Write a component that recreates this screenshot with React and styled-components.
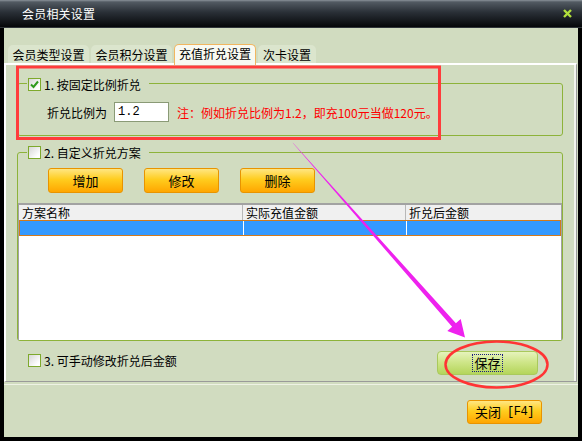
import React from "react";
import styled, { createGlobalStyle } from "styled-components";

const GlobalStyle = createGlobalStyle`
  html, body {
    margin: 0;
    padding: 0;
    background: #000;
  }
  body {
    font-family: "Noto Sans CJK SC", "Liberation Sans", sans-serif;
    font-size: 12px;
    color: #000;
  }
  * {
    box-sizing: border-box;
  }
`;

const Window = styled.div`
  position: relative;
  width: 582px;
  height: 441px;
  background: #000;
  display: flex;
  flex-direction: column;
  overflow: hidden;
`;

const TitleBar = styled.div`
  flex: none;
  height: 28px;
  display: flex;
  align-items: center;
  justify-content: space-between;
  padding: 0 10px 0 22px;
  background: linear-gradient(#8a9299 0, #525a62 2px, #2a3037 45%, #050709 100%);
  border-bottom: 1px solid #30353a;
`;

const Title = styled.span`
  color: #fff;
  font-size: 12px;
  line-height: 14px;
  letter-spacing: 0.2px;
`;

const Body = styled.div`
  flex: 1;
  margin: 0 4px 4px;
  background: #d1dcc0;
  display: flex;
  flex-direction: column;
`;

const TabStrip = styled.div`
  position: relative;
  z-index: 1;
  height: 19px;
  margin-top: 16px;
  padding-left: 4px;
  display: flex;
  align-items: flex-end;
  gap: 2px;
`;

const Tab = styled.div`
  width: ${(p) => p.$w}px;
  height: ${(p) => (p.$active ? 21 : 18)}px;
  margin-bottom: ${(p) => (p.$active ? -2 : 0)}px;
  display: flex;
  align-items: center;
  justify-content: center;
  line-height: 14px;
  border-radius: 5px 5px 0 0;
  background: ${(p) => (p.$active ? "#f8f9f1" : "#dbe5cd")};
  border: 1px solid ${(p) => (p.$active ? "#f1b660" : "transparent")};
  border-bottom: none;
  padding-bottom: ${(p) => (p.$active ? 2 : 0)}px;
`;

const TabPanel = styled.div`
  height: 319px;
  margin-right: 1px;
  border-style: solid;
  border-width: 2px 1px 1px 2px;
  border-color: #fff #9a9a9a #9a9a9a #fff;
  box-shadow: inset -2px 0 0 #f3f5ee;
  padding: 12px 13px 0 11px;
  display: flex;
  flex-direction: column;
`;

const Group = styled.fieldset`
  margin: ${(p) => p.$top || 0}px 0 0;
  padding: 0;
  min-width: 0;
  border: 1px solid #8db33a;
  border-radius: 3px;
`;

const Legend = styled.legend`
  margin-left: 9px;
  padding: 0 8px 0 1px;
  height: 13px;
  line-height: 13px;
`;

const LegendInner = styled.span`
  display: inline-flex;
  align-items: center;
  gap: 3px;
  height: 13px;
`;

const Box = styled.span`
  flex: none;
  width: 13px;
  height: 13px;
  border: 1px solid #7ea92c;
  background: linear-gradient(135deg, #d6d6d6, #ffffff 80%);
  display: inline-flex;
  align-items: center;
  justify-content: center;
`;

const RatioRow = styled.div`
  height: 20px;
  margin: 12px 0 13px;
  padding-left: 29px;
  display: flex;
  align-items: center;
`;

const RatioInput = styled.input`
  width: 55px;
  height: 20px;
  margin: 0 8px 0 7px;
  padding: 0 0 0 3px;
  border: 1px solid #8a9a76;
  background: #fff;
  font-family: "Liberation Mono", monospace;
  font-size: 12px;
  color: #000;
  outline: none;
`;

const Note = styled.span`
  color: #ff0000;
  white-space: nowrap;
`;

const ButtonRow = styled.div`
  margin-top: 9px;
  padding-left: 30px;
  display: flex;
  gap: 21px;
`;

const OrangeButton = styled.div`
  width: ${(p) => p.$w || 75}px;
  height: ${(p) => p.$h || 25}px;
  display: flex;
  align-items: center;
  justify-content: center;
  gap: 6px;
  border: 1px solid #e89400;
  border-radius: 3px;
  background: linear-gradient(#ffe682 0, #ffcd1e 45%, #ffa600 100%);
  font-size: ${(p) => p.$fs || 13}px;
  line-height: 14px;
`;

const Hotkey = styled.span`
  font-family: "Liberation Mono", monospace;
  font-size: 12px;
  letter-spacing: -0.5px;
`;

const List = styled.div`
  margin-top: 10px;
  height: 137px;
  background: #fff;
  border-top: 2px solid #a2a2a2;
  border-left: 1px solid #a2a2a2;
  border-right: 1px solid #a2a2a2;
`;

const ListRow = styled.div`
  display: grid;
  grid-template-columns: 224px 163px 1fr;
  height: ${(p) => (p.$head ? 15 : 16)}px;
  background: ${(p) => (p.$selected ? "#3399ff" : "#f0f0f0")};
  border: ${(p) => (p.$selected ? "1px solid #d27a1c" : "none")};
`;

const Cell = styled.div`
  padding-left: 3px;
  line-height: 15px;
  white-space: nowrap;
  border-right: ${(p) =>
    p.$last ? "none" : p.$sel ? "1px solid #ffffff" : "1px solid #b8b8b8"};
`;

const BottomRow = styled.div`
  margin-top: 10px;
  padding: 0 25px 0 11px;
  display: flex;
  justify-content: space-between;
  align-items: flex-start;
`;

const CheckLabel = styled.div`
  margin-top: 3px;
  display: flex;
  align-items: center;
  gap: 3px;
  line-height: 13px;
`;

const SaveButton = styled.div`
  width: 101px;
  height: 24px;
  display: flex;
  align-items: center;
  justify-content: center;
  border: 1px solid #a9c95c;
  border-radius: 4px;
  background: linear-gradient(#e6f3bc 0, #cfe68a 45%, #b4d55a 100%);
`;

const FocusText = styled.span`
  padding: 0 1px;
  border: 1px dotted #1a1a80;
  font-size: 13px;
  line-height: 16px;
`;

const Footer = styled.div`
  margin-top: 2px;
  border-top: 1px solid #eef2e5;
  padding: 15px 36px 0 0;
  display: flex;
  justify-content: flex-end;
`;

const Overlay = styled.svg`
  position: absolute;
  left: 0;
  top: 0;
  pointer-events: none;
`;

const Check = ({ checked }) => (
  <Box>
    {checked && (
      <svg width="9" height="9" viewBox="0 0 9 9">
        <path d="M1 4.5 L3.5 7 L8 1.5" fill="none" stroke="#2f9a1e" strokeWidth="2" />
      </svg>
    )}
  </Box>
);

const tabs = [
  { label: "会员类型设置", w: 81 },
  { label: "会员积分设置", w: 81 },
  { label: "充值折兑设置", w: 82, active: true },
  { label: "次卡设置", w: 58 },
];

const columns = ["方案名称", "实际充值金额", "折兑后金额"];

export default function App() {
  return (
    <>
      <GlobalStyle />
      <Window>
        <TitleBar>
          <Title>会员相关设置</Title>
          <svg width="9" height="9" viewBox="0 0 9 9">
            <path d="M1 1 L8 8 M8 1 L1 8" stroke="#b2e03c" strokeWidth="2.4" />
          </svg>
        </TitleBar>
        <Body>
          <TabStrip>
            {tabs.map((t) => (
              <Tab key={t.label} $w={t.w} $active={t.active}>
                {t.label}
              </Tab>
            ))}
          </TabStrip>
          <TabPanel>
            <Group>
              <Legend>
                <LegendInner>
                  <Check checked />
                  1. 按固定比例折兑
                </LegendInner>
              </Legend>
              <RatioRow>
                折兑比例为
                <RatioInput defaultValue="1.2" readOnly />
                <Note>注：例如折兑比例为1.2，即充100元当做120元。</Note>
              </RatioRow>
            </Group>
            <Group $top={10}>
              <Legend>
                <LegendInner>
                  <Check />
                  2. 自定义折兑方案
                </LegendInner>
              </Legend>
              <ButtonRow>
                <OrangeButton>增加</OrangeButton>
                <OrangeButton>修改</OrangeButton>
                <OrangeButton>删除</OrangeButton>
              </ButtonRow>
              <List>
                <ListRow $head>
                  {columns.map((c, i) => (
                    <Cell key={c} $last={i === 2}>
                      {c}
                    </Cell>
                  ))}
                </ListRow>
                <ListRow $selected>
                  <Cell $sel />
                  <Cell $sel />
                  <Cell $sel $last />
                </ListRow>
              </List>
            </Group>
            <BottomRow>
              <CheckLabel>
                <Check />
                3. 可手动修改折兑后金额
              </CheckLabel>
              <SaveButton>
                <FocusText>保存</FocusText>
              </SaveButton>
            </BottomRow>
          </TabPanel>
          <Footer>
            <OrangeButton $w={75} $h={24} $fs={13}>
              关闭
              <Hotkey>[F4]</Hotkey>
            </OrangeButton>
          </Footer>
        </Body>
        <Overlay width="582" height="441" viewBox="0 0 582 441">
          <rect x="17.5" y="67" width="422" height="71.5" fill="none" stroke="#ff3c3c" strokeWidth="3" />
          <ellipse cx="496.5" cy="364.5" rx="51" ry="23" fill="none" stroke="#ff3434" strokeWidth="2.5" />
          <polygon
            points="292.4,142.6 293.6,143.4 455.9,323.3 460.7,319 465,337.5 447.3,331 452.1,326.7"
            fill="#ee22ee"
          />
        </Overlay>
      </Window>
    </>
  );
}
